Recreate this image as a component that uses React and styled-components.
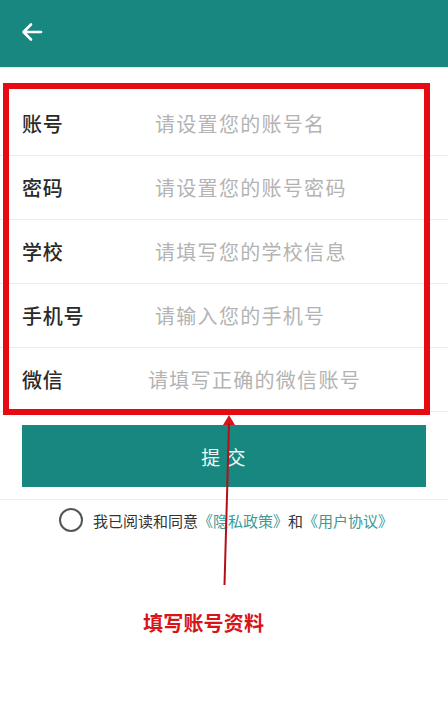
import styled, { createGlobalStyle } from 'styled-components';

const GlobalStyle = createGlobalStyle`
  html, body {
    margin: 0;
    padding: 0;
    background: #fff;
  }
  body {
    font-family: "Noto Sans CJK SC", "Noto Sans", sans-serif;
  }
`;

const fields = [
  { label: '账号', placeholder: '请设置您的账号名' },
  { label: '密码', placeholder: '请设置您的账号密码' },
  { label: '学校', placeholder: '请填写您的学校信息' },
  { label: '手机号', placeholder: '请输入您的手机号' },
  { label: '微信', placeholder: '请填写正确的微信账号', shift: -7 },
];

const App = () => {
  return (
    <Page>
      <GlobalStyle />
      <Header>
        <BackButton aria-label="返回">
          <svg width="22" height="20" viewBox="0 0 22 20" fill="none">
            <path
              d="M20 10H3M10 2.5L2.5 10L10 17.5"
              stroke="#fff"
              strokeWidth="2.6"
              strokeLinecap="round"
              strokeLinejoin="round"
            />
          </svg>
        </BackButton>
      </Header>

      <Form>
        {fields.map((f) => (
          <Row key={f.label}>
            <Label>{f.label}</Label>
            <Placeholder $shift={f.shift || 0}>{f.placeholder}</Placeholder>
          </Row>
        ))}
      </Form>

      <SubmitButton>提 交</SubmitButton>
      <Divider />

      <Agreement>
        <Radio />
        <AgreeText>我已阅读和同意</AgreeText>
        <LinkText>《隐私政策》</LinkText>
        <AgreeText>和</AgreeText>
        <LinkText>《用户协议》</LinkText>
      </Agreement>

      <HighlightBox />
      <Arrow width="20" height="175" viewBox="0 0 20 175">
        <path d="M6 0L12 10H0Z" fill="#d8141b" transform="translate(4,0)" />
        <path d="M10 9L5.5 170" stroke="#b3101a" strokeWidth="2" />
      </Arrow>
      <Note>填写账号资料</Note>
    </Page>
  );
};

const Page = styled.div`
  position: relative;
  width: 448px;
  min-height: 720px;
  background: #fff;
`;

const Header = styled.header`
  height: 67px;
  background: #17877f;
  display: flex;
  align-items: center;
  padding-left: 21px;
  box-sizing: border-box;
  box-shadow: 0 1px 2px rgba(0, 0, 0, 0.12);
`;

const BackButton = styled.div`
  display: flex;
  align-items: center;
  margin-top: -3px;
`;

const Form = styled.div`
  margin-top: 25px;
`;

const Row = styled.div`
  height: 63px;
  border-bottom: 1px solid #ececec;
  display: flex;
  align-items: center;
  padding-left: 22px;
`;

const Label = styled.span`
  width: 133px;
  font-size: 20px;
  letter-spacing: 0.7px;
  font-weight: 500;
  color: #2a2a2a;
`;

const Placeholder = styled.span`
  margin-left: ${(p) => p.$shift}px;
  font-size: 20px;
  letter-spacing: 1.3px;
  color: #b3b3b3;
`;

const SubmitButton = styled.div`
  margin: 13px 22px 0;
  height: 62px;
  background: #17877f;
  color: #eef7f6;
  font-size: 19px;
  display: flex;
  align-items: center;
  justify-content: center;
  letter-spacing: 1px;
`;

const Divider = styled.div`
  margin-top: 12px;
  height: 1px;
  background: #ededed;
`;

const Agreement = styled.div`
  display: flex;
  align-items: center;
  padding-left: 59px;
  height: 40px;
`;

const Radio = styled.span`
  width: 20px;
  height: 20px;
  border: 2px solid #555;
  border-radius: 50%;
  margin-right: 10px;
`;

const AgreeText = styled.span`
  font-size: 15px;
  color: #333;
`;

const LinkText = styled.span`
  font-size: 15px;
  color: #3a9b95;
`;

const HighlightBox = styled.div`
  position: absolute;
  left: 3px;
  top: 83px;
  width: 427px;
  height: 332px;
  box-sizing: border-box;
  border: 6px solid #e60a12;
  pointer-events: none;
`;

const Arrow = styled.svg`
  position: absolute;
  left: 219px;
  top: 415px;
  overflow: visible;
`;

const Note = styled.div`
  position: absolute;
  left: 143px;
  top: 608px;
  font-size: 20px;
  font-weight: 700;
  color: #d8141b;
  letter-spacing: 0.2px;
`;

export default App;
